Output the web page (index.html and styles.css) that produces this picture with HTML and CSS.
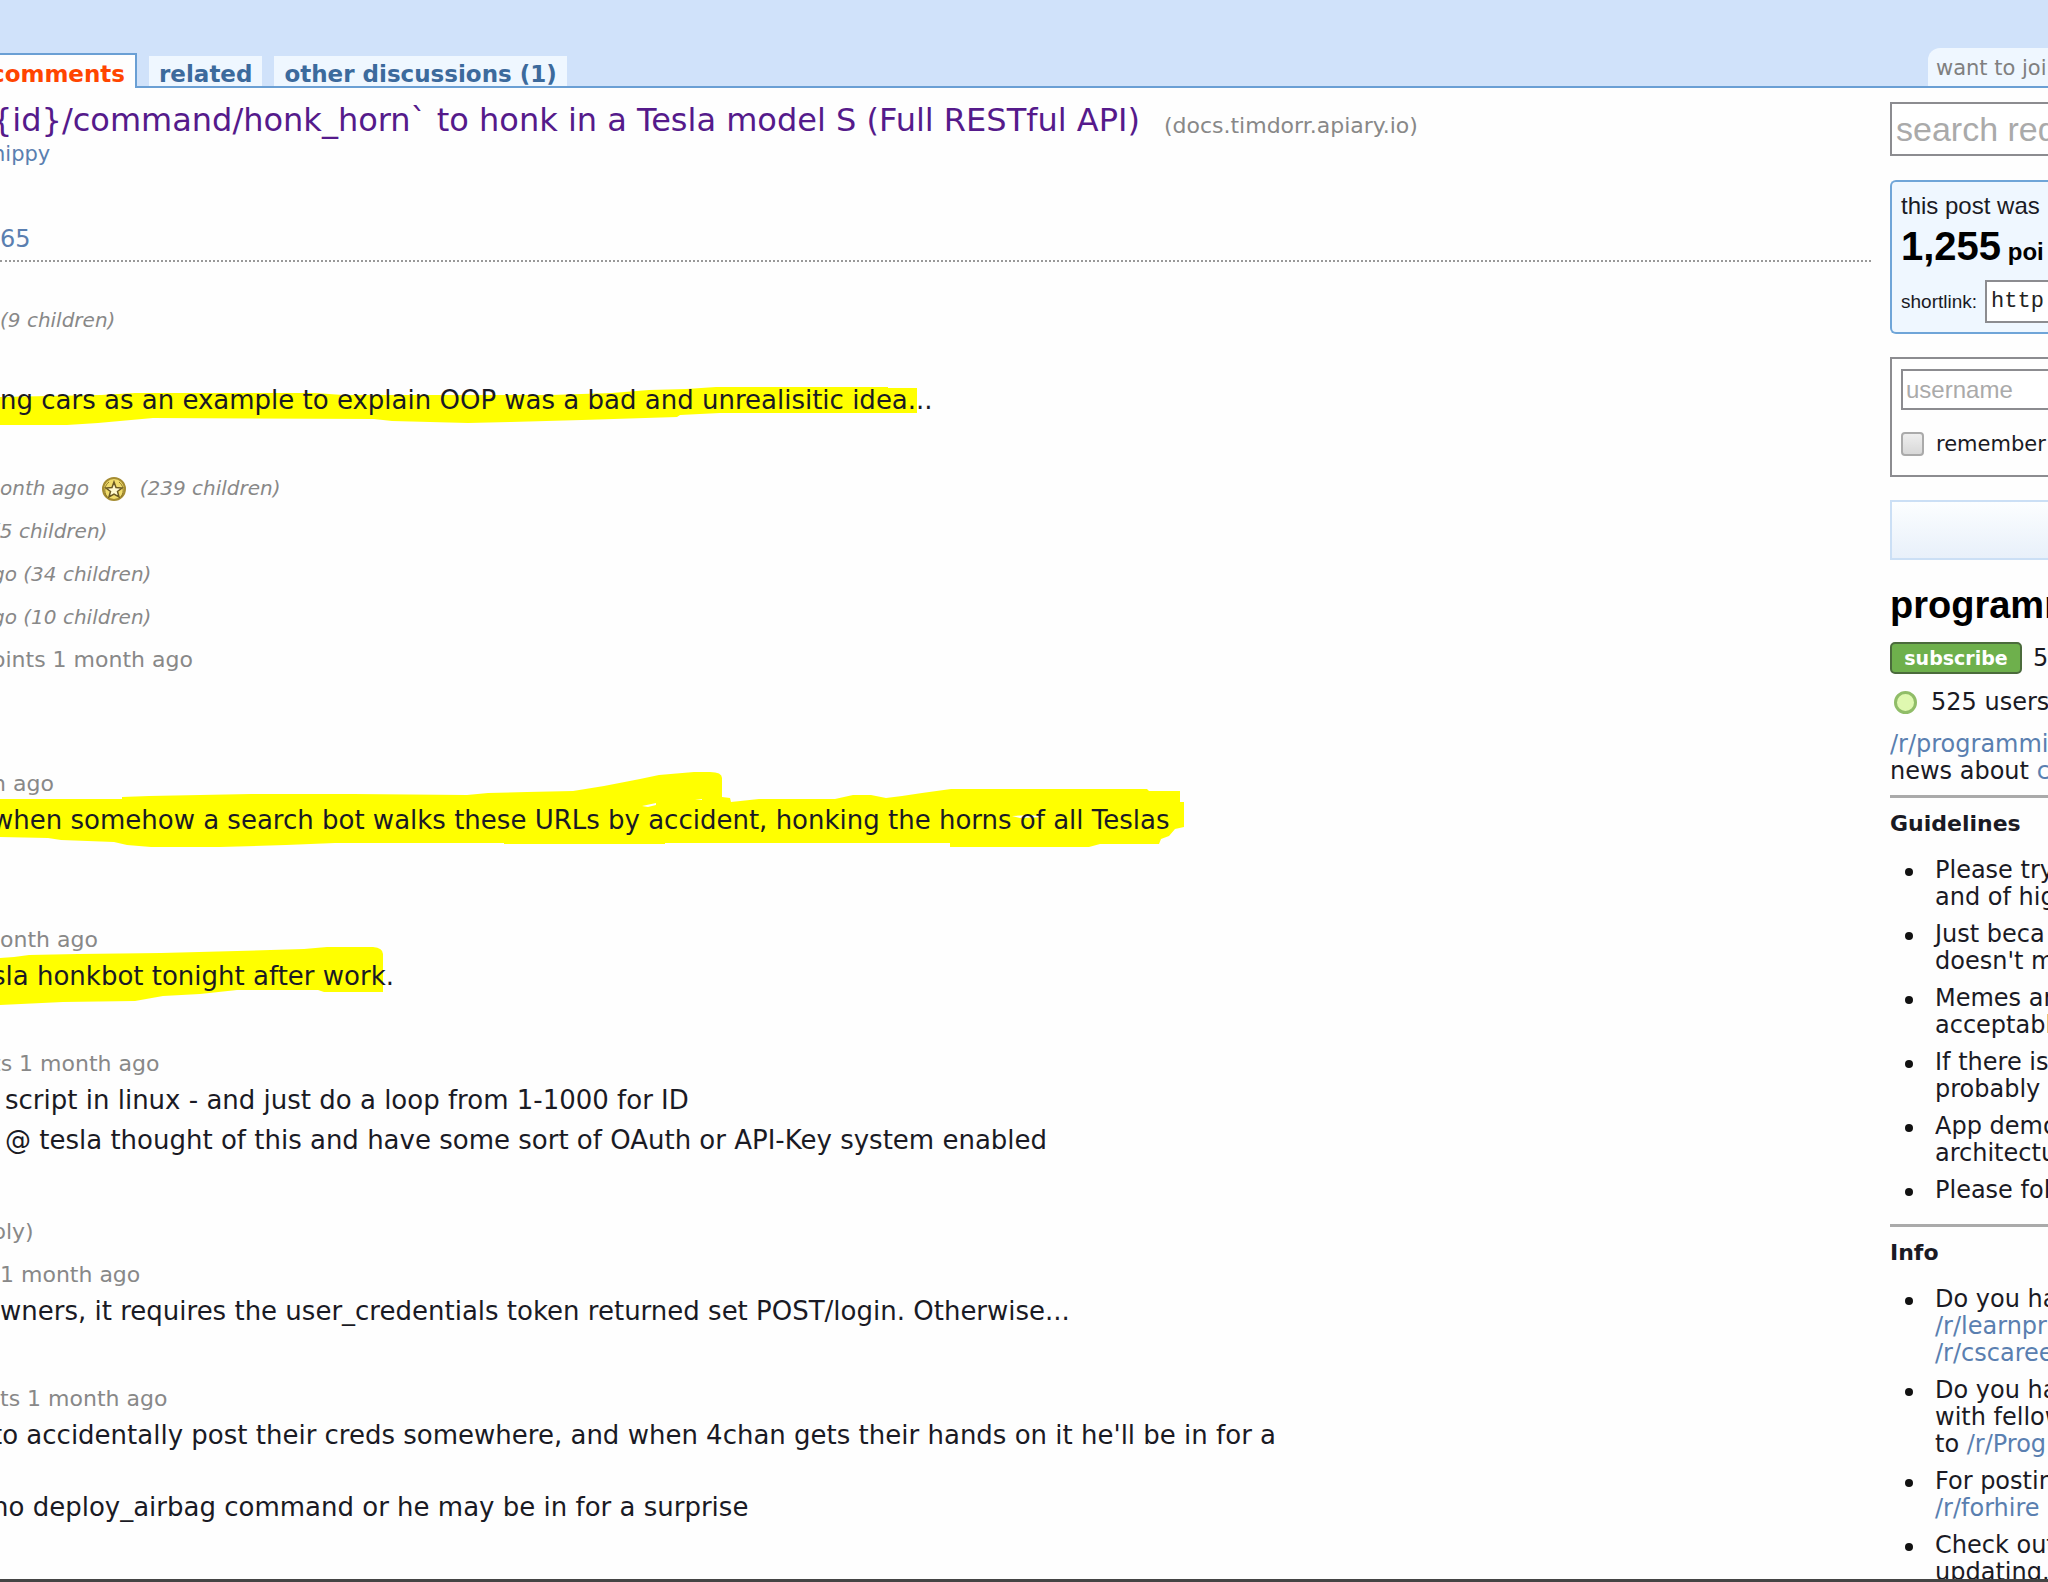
FILE: index.html
```html
<!DOCTYPE html>
<html lang="en">
<head>
    <meta charset="UTF-8">
    <meta name="viewport" content="width=device-width, initial-scale=1.0">
    <title>programming: comments</title>

    <link rel="stylesheet" href="styles.css">
</head>
<body>
    <header class="header">
        <nav class="tabs">
            <a href="#" class="tab active">comments</a>
            <a href="#" class="tab">related</a>
            <a href="#" class="tab">other discussions (1)</a>
        </nav>
        <div class="join">want to joi</div>
    </header>

    <div class="page">
        <main class="content">
            <div class="title-row cut">
                <a href="#" class="title">{id}/command/honk_horn` to honk in a Tesla model S (Full RESTful API)</a>
                <span class="domain">(<a href="#">docs.timdorr.apiary.io</a>)</span>
            </div>
            <div class="author cut"><a href="#">hippy</a></div>
            <div class="count"><a href="#">65</a></div>

            <div class="comments">
                <p class="meta collapsed gap-m">(9 children)</p>

                <div class="text gap-l">
                    <svg class="marker" width="920" height="50" viewBox="0 0 920 50">
                        <path d="M0 17L49 16 101 15 135 13H315L343 15H551L612 13 649 10 686 9 716 7H888V8H917V33H720L680 35 677 37 582 40 511 42 468 43 392 41 374 39 153 38 98 43 67 45H0Z"/>
                    </svg>
                    <p>ng cars as an example to explain OOP was a bad and unrealisitic idea...</p>
                </div>

                <p class="meta collapsed gap-s">onth ago
                    <svg class="gold" width="26" height="26" viewBox="0 0 26 26">
                        <circle cx="13" cy="12" r="11" fill="#f0dc6c" stroke="#a58c32" stroke-width="2"/>
                        <path d="M6 20C2 14 4 8 8 5M20 20C24 14 22 8 18 5" fill="none" stroke="#8d7628" stroke-width="1"/>
                        <path d="M13 5L15 10.500 21 11 16.500 14.500 18 20 13 17 8 20 9.500 14.500 5 11 11 10.500Z" fill="#fff9d0" stroke="#6b5a23" stroke-width="1.500"/>
                    </svg>
                    (239 children)</p>
                <p class="meta collapsed gap-s cut">(5 children)</p>
                <p class="meta collapsed gap-s cut">go (34 children)</p>
                <p class="meta collapsed gap-s cut">go (10 children)</p>
                <p class="meta gap-xxl cut">oints 1 month ago</p>

                <p class="meta cut">h ago</p>
                <div class="text gap-xl">
                    <svg class="marker" width="1190" height="80" viewBox="0 -30 1190 80">
                        <path d="M0 -1H122V-3L149 -4 251 -6H353L467 -5 488 -7 527 -8 573 -9 604 -14 640 -21 659 -25 694 -28H710Q722 -28 722 -22V-3L730 -2 731 2 759 -1H835L853 -5H871L886 -2 902 -4 922 -7 951 -11H1147L1149 -9H1180V2H1184V27L1175 29 1169 36 1161 39 1159 44H1100L1089 47H950V43H665V44H504V43H335L286 45 220 47H151L127 45 114 42 61 40 48 38 0 37Z"/>
                        <path class="gap" d="M642 6L656 3V5L648 7ZM695 0L702 -1V0ZM1012 16L1030 15 1045 17 1020 18Z"/>
                    </svg>
                    <p class="cut">when somehow a search bot walks these URLs by accident, honking the horns of all Teslas</p>
                </div>

                <p class="meta">onth ago</p>
                <div class="text gap-l">
                    <svg class="marker" width="390" height="60" viewBox="0 -8 390 60">
                        <path d="M0 4L14 3 29 1 78 0 161 -1 237 -3 304 -5 327 -7H373Q383 -6 383 0V38H324L318 36H237L200 40 163 42 135 47 63 48 0 51Z"/>
                    </svg>
                    <p class="cut">sla honkbot tonight after work.</p>
                </div>

                <p class="meta cut">ts 1 month ago</p>
                <div class="text indent gap-reply">
                    <p>script in linux - and just do a loop from 1-1000 for ID</p>
                    <p>@ tesla thought of this and have some sort of OAuth or API-Key system enabled</p>
                </div>

                <p class="meta gap-s cut">ply)</p>

                <p class="meta">1 month ago</p>
                <div class="text gap-l">
                    <p>wners, it requires the user_credentials token returned set POST/login. Otherwise...</p>
                </div>

                <p class="meta">ts 1 month ago</p>
                <div class="text">
                    <p class="cut gap-n">to accidentally post their creds somewhere, and when 4chan gets their hands on it he'll be in for a</p>
                    <p class="cut">no deploy_airbag command or he may be in for a surprise</p>
                </div>
            </div>
        </main>

        <aside class="side">
            <input type="text" class="search" placeholder="search red" aria-label="search">

            <div class="linkinfo">
                <div class="submitted">this post was</div>
                <div class="score"><span class="number">1,255</span> poi</div>
                <div class="shortlink">
                    <label for="shortlink">shortlink:</label>
                    <input type="text" id="shortlink" value="http">
                </div>
            </div>

            <form class="login">
                <input type="text" class="username" placeholder="username" aria-label="username">
                <div class="remember">
                    <input type="checkbox" id="remember">
                    <label for="remember">remember</label>
                </div>
            </form>

            <div class="banner"></div>

            <h1>programm</h1>
            <div class="subscribe-row">
                <button type="button" class="subscribe">subscribe</button>
                <span>5</span>
            </div>
            <div class="online"><span class="dot"></span>525 users</div>

            <div class="usertext">
                <p><a href="#">/r/programmi</a><br>news about <a href="#">c</a></p>
                <hr>
                <h2>Guidelines</h2>
                <ul>
                    <li>Please try<br>and of hig</li>
                    <li>Just beca<br>doesn't m</li>
                    <li>Memes ar<br>acceptabl</li>
                    <li>If there is<br>probably</li>
                    <li>App demo<br>architectu</li>
                    <li>Please fol</li>
                </ul>
                <hr>
                <h2>Info</h2>
                <ul>
                    <li>Do you ha<br><a href="#">/r/learnpr</a><br><a href="#">/r/cscaree</a></li>
                    <li>Do you ha<br>with fellow<br>to <a href="#">/r/Prog</a></li>
                    <li>For postin<br><a href="#">/r/forhire</a></li>
                    <li>Check out<br>updating.</li>
                </ul>
            </div>
        </aside>
    </div>
</body>
</html>
```
FILE: styles.css
```css
* {
    box-sizing: border-box;
}

body {
    margin: 0;
    height: 100vh;
    display: flex;
    flex-direction: column;
    overflow: hidden;
    font-family: Verdana, "DejaVu Sans", sans-serif;
    font-size: 24px;
    color: #1a1a24;
    background: #fefefe;
    border-bottom: 3px solid #444;
}

a {
    color: #5a7fb0;
    text-decoration: none;
}

p, h1, h2, ul {
    margin: 0;
}

/* header */
.header {
    flex: none;
    height: 88px;
    display: flex;
    justify-content: space-between;
    align-items: flex-end;
    background: #d0e2fa;
    border-bottom: 2px solid #6a9fd4;
}

.tabs {
    display: flex;
    align-items: flex-end;
    gap: 12px;
    margin-left: -21px;
}

.tab {
    height: 30px;
    padding: 0 10px;
    font-size: 23px;
    line-height: 36px;
    font-weight: bold;
    color: #3c6a9c;
    background: #eff7ff;
}

.tab.active {
    height: 35px;
    margin-bottom: -2px;
    color: #ff4500;
    background: #fefefe;
    border: 2px solid #6a9fd4;
    border-bottom: none;
    line-height: 38px;
}

.join {
    width: 120px;
    height: 38px;
    padding-left: 8px;
    overflow: hidden;
    white-space: nowrap;
    font-size: 21px;
    line-height: 40px;
    color: #808080;
    background: #eff7ff;
    border-top-left-radius: 12px;
}

.page {
    flex: 1;
    min-height: 0;
    display: flex;
    gap: 19px;
}

/* post and comments */
.content {
    flex: 1;
    min-width: 0;
    overflow: hidden;
}

.cut {
    margin-left: -8px;
}

.title-row {
    display: flex;
    align-items: flex-end;
    gap: 24px;
    padding-top: 12px;
    white-space: nowrap;
}

.title {
    font-size: 32px;
    line-height: 40px;
    color: #551a8b;
}

.domain {
    line-height: 28px;
}

.domain,
.domain a {
    font-size: 22px;
    color: #888;
}

.author {
    font-size: 21px;
    line-height: 28px;
}

.count {
    height: 94px;
    padding-top: 55px;
    line-height: 32px;
    border-bottom: 2px dotted #999;
}

.comments {
    padding-top: 42px;
    white-space: nowrap;
}

.meta {
    font-size: 22px;
    line-height: 32px;
    color: #888;
}

.collapsed {
    font-size: 20px;
    font-style: italic;
}

.gold {
    margin: 0 6px;
    vertical-align: middle;
}

.text {
    position: relative;
    font-size: 26px;
    line-height: 40px;
}

.text p {
    position: relative;
}

.indent {
    padding-left: 5px;
}

/* hand drawn highlighter behind a line */
.marker {
    position: absolute;
    left: 0;
    bottom: -10px;
    fill: #ff0;
}

.marker .gap {
    fill: #fefefe;
}

.gap-s {
    margin-bottom: 11px;
}

.gap-n {
    margin-bottom: 32px;
}

.gap-m {
    margin-bottom: 44px;
}

.gap-l {
    margin-bottom: 52px;
}

.gap-reply {
    margin-bottom: 56px;
}

.gap-xl {
    margin-bottom: 84px;
}

.gap-xxl {
    margin-bottom: 92px;
}

/* sidebar */
.side {
    flex: none;
    width: 158px;
    overflow: hidden;
    white-space: nowrap;
}

.side input[type="text"] {
    border: 2px solid #8c8c90;
    border-right: none;
    background: #fff;
    outline: none;
}

.side ::placeholder {
    color: #aaa;
    opacity: 1;
}

.search {
    display: block;
    width: 100%;
    height: 54px;
    margin-top: 14px;
    padding: 0 0 0 4px;
    font: 34px "Liberation Sans", Arial, sans-serif;
}

.linkinfo {
    height: 154px;
    margin-top: 24px;
    padding: 8px 0 0 9px;
    font-family: "Liberation Sans", Arial, sans-serif;
    background: #eff7ff;
    border: 2px solid #6fa5d8;
    border-right: none;
    border-radius: 6px 0 0 6px;
}

.submitted {
    line-height: 32px;
}

.score {
    font-weight: bold;
    line-height: 48px;
    color: #000;
}

.number {
    font-size: 40px;
}

.shortlink {
    display: flex;
    align-items: center;
    gap: 8px;
    padding-top: 4px;
    font-size: 19px;
}

.shortlink input {
    width: 100px;
    height: 43px;
    padding: 0 4px;
    font: 22px "Liberation Mono", "Courier New", monospace;
    color: #222;
}

.login {
    height: 120px;
    margin-top: 23px;
    padding: 10px 0 0 9px;
    border: 2px solid #8c8c90;
    border-right: none;
}

.username {
    display: block;
    width: 100%;
    height: 41px;
    padding: 0 3px;
    font: 24px "Liberation Sans", Arial, sans-serif;
}

.remember {
    display: flex;
    align-items: center;
    gap: 12px;
    margin-top: 18px;
    font-size: 21px;
    line-height: 32px;
}

.remember input {
    flex: none;
    appearance: none;
    width: 23px;
    height: 24px;
    margin: 0;
    border: 2px solid #aaa;
    border-radius: 4px;
    background: linear-gradient(#eee, #d8d8d8);
}

.banner {
    height: 60px;
    margin-top: 23px;
    background: linear-gradient(#fcfeff, #e8f0fa);
    border: 2px solid #cbdff5;
    border-right: none;
}

h1 {
    margin-top: 22px;
    font: bold 38px/46px "Liberation Sans", Arial, sans-serif;
    color: #000;
}

.subscribe-row {
    display: flex;
    align-items: center;
    gap: 11px;
    margin-top: 14px;
    line-height: 32px;
}

.subscribe {
    flex: none;
    width: 132px;
    height: 32px;
    padding: 0;
    font: bold 19px Verdana, "DejaVu Sans", sans-serif;
    color: #fff;
    background: #6eb04c;
    border: 2px solid #4b6b3c;
    border-radius: 5px;
}

.online {
    display: flex;
    align-items: center;
    gap: 14px;
    padding-left: 4px;
    margin-top: 12px;
    line-height: 32px;
}

.dot {
    flex: none;
    width: 23px;
    height: 23px;
    background: #dff8b0;
    border: 3px solid #90bd68;
    border-radius: 50%;
}

.usertext {
    margin-top: 13px;
    line-height: 27px;
}

hr {
    margin: 10px 0 11px;
    border: none;
    border-top: 3px solid #aaa;
}

h2 {
    font-size: 22px;
    line-height: 30px;
}

.usertext ul {
    margin: 18px 0 20px;
    padding-left: 45px;
    list-style: none;
}

.usertext li {
    position: relative;
    margin-bottom: 10px;
}

/* bullet */
.usertext li::before {
    content: "";
    position: absolute;
    top: 11px;
    left: -30px;
    width: 8px;
    height: 8px;
    background: #111;
    border-radius: 50%;
}
```
